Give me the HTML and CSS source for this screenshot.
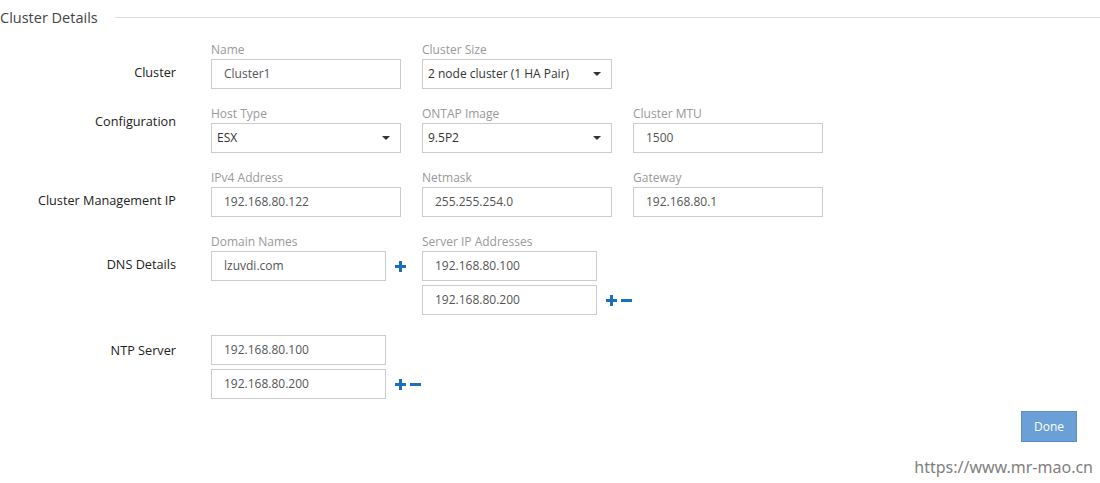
FILE: index.html
```html
<!DOCTYPE html>
<html lang="en">
<head>
    <meta charset="UTF-8">
    <title>Cluster Details</title>
    <link rel="stylesheet" href="styles.css">
</head>
<body>

    <div class="legend">
        <span class="legend-text">Cluster Details</span>
        <div class="rule"></div>
    </div>

    <div class="row">
        <div class="row-label">Cluster</div>
        <div class="fields">
            <div class="field">
                <div class="field-label">Name</div>
                <div class="box">Cluster1</div>
            </div>
            <div class="field">
                <div class="field-label">Cluster Size</div>
                <div class="box select">2 node cluster (1 HA Pair)<span class="caret"></span></div>
            </div>
        </div>
    </div>

    <div class="row">
        <div class="row-label high">Configuration</div>
        <div class="fields">
            <div class="field">
                <div class="field-label">Host Type</div>
                <div class="box select">ESX<span class="caret"></span></div>
            </div>
            <div class="field">
                <div class="field-label">ONTAP Image</div>
                <div class="box select">9.5P2<span class="caret"></span></div>
            </div>
            <div class="field">
                <div class="field-label">Cluster MTU</div>
                <div class="box">1500</div>
            </div>
        </div>
    </div>

    <div class="row">
        <div class="row-label">Cluster Management IP</div>
        <div class="fields">
            <div class="field">
                <div class="field-label">IPv4 Address</div>
                <div class="box">192.168.80.122</div>
            </div>
            <div class="field">
                <div class="field-label">Netmask</div>
                <div class="box">255.255.254.0</div>
            </div>
            <div class="field">
                <div class="field-label">Gateway</div>
                <div class="box">192.168.80.1</div>
            </div>
        </div>
    </div>

    <div class="row">
        <div class="row-label">DNS Details</div>
        <div class="fields">
            <div class="field">
                <div class="field-label">Domain Names</div>
                <div class="line">
                    <div class="box short">lzuvdi.com</div>
                    <svg class="icon" width="11" height="11" viewBox="0 0 11 11"><rect x="0" y="4" width="11" height="3"/><rect x="4" y="0" width="3" height="11"/></svg>
                </div>
            </div>
            <div class="field">
                <div class="field-label">Server IP Addresses</div>
                <div class="line">
                    <div class="box short">192.168.80.100</div>
                </div>
                <div class="line">
                    <div class="box short">192.168.80.200</div>
                    <svg class="icon" width="11" height="11" viewBox="0 0 11 11"><rect x="0" y="4" width="11" height="3"/><rect x="4" y="0" width="3" height="11"/></svg>
                    <svg class="icon minus" width="11" height="11" viewBox="0 0 11 11"><rect x="0" y="4" width="11" height="3"/></svg>
                </div>
            </div>
        </div>
    </div>

    <div class="row ntp">
        <div class="row-label low">NTP Server</div>
        <div class="fields">
            <div class="field">
                <div class="line">
                    <div class="box short">192.168.80.100</div>
                </div>
                <div class="line">
                    <div class="box short">192.168.80.200</div>
                    <svg class="icon" width="11" height="11" viewBox="0 0 11 11"><rect x="0" y="4" width="11" height="3"/><rect x="4" y="0" width="3" height="11"/></svg>
                    <svg class="icon minus" width="11" height="11" viewBox="0 0 11 11"><rect x="0" y="4" width="11" height="3"/></svg>
                </div>
            </div>
        </div>
    </div>

    <div class="actions">
        <button class="button">Done</button>
    </div>

    <div class="watermark">https://www.mr-mao.cn</div>

</body>
</html>
```

FILE: styles.css
```css
body {
    margin: 0px;
    font-family: "Open Sans", "Liberation Sans", sans-serif;
    color: #333;
    background: #fff;
    width: 1100px;
    height: 483px;
    position: relative;
    overflow: hidden;
}

.legend {
    display: flex;
    align-items: center;
    height: 34px;
}
.legend-text {
    font-size: 14.5px;
    color: #444;
}
.rule {
    flex: 1;
    border-top: 1px solid #ddd;
    margin-left: 17px;
}

.row {
    display: flex;
    margin-top: 7px;
    margin-bottom: 16px;
}
.row + .row {
    margin-top: 0px;
}
.row.ntp {
    margin-bottom: 8px;
}
.row-label {
    width: 176px;
    margin-right: 35px;
    text-align: right;
    font-size: 12.7px;
    line-height: 16px;
    padding-top: 23px;
    color: #222;
}
.row-label.high {
    padding-top: 8px;
}
.row-label.low {
    padding-top: 7px;
}

.fields {
    display: flex;
    gap: 21px;
}
.field {
    width: 190px;
}
.field-label {
    height: 18px;
    font-size: 12px;
    line-height: 18px;
    color: #999;
}

.box {
    width: 190px;
    height: 30px;
    flex-shrink: 0;
    box-sizing: border-box;
    border: 1px solid #ccc;
    padding-left: 12px;
    font-size: 12px;
    line-height: 28px;
    color: #555;
}
.box.short {
    width: 175px;
}
.select {
    display: flex;
    justify-content: space-between;
    align-items: center;
    padding: 0px 10px 0px 5px;
    color: #333;
}
.caret {
    width: 0;
    height: 0;
    border-left: 4px solid transparent;
    border-right: 4px solid transparent;
    border-top: 4px solid #333;
}

.line {
    display: flex;
    align-items: center;
    margin-bottom: 4px;
}
.icon {
    flex-shrink: 0;
    fill: #1a6fc0;
    margin-left: 9px;
}
.icon.minus {
    margin-left: 4px;
}

.actions {
    display: flex;
    justify-content: flex-end;
    padding-right: 23px;
}
.button {
    width: 56px;
    height: 31px;
    background-color: #6a9fd8;
    border: 1px solid #5b8fcc;
    color: white;
    font-family: "Open Sans", sans-serif;
    font-size: 12px;
    padding: 0px;
}

.watermark {
    position: absolute;
    right: 7px;
    top: 456px;
    font-family: "Noto Sans", sans-serif;
    font-size: 16px;
    color: #808080;
}
```
